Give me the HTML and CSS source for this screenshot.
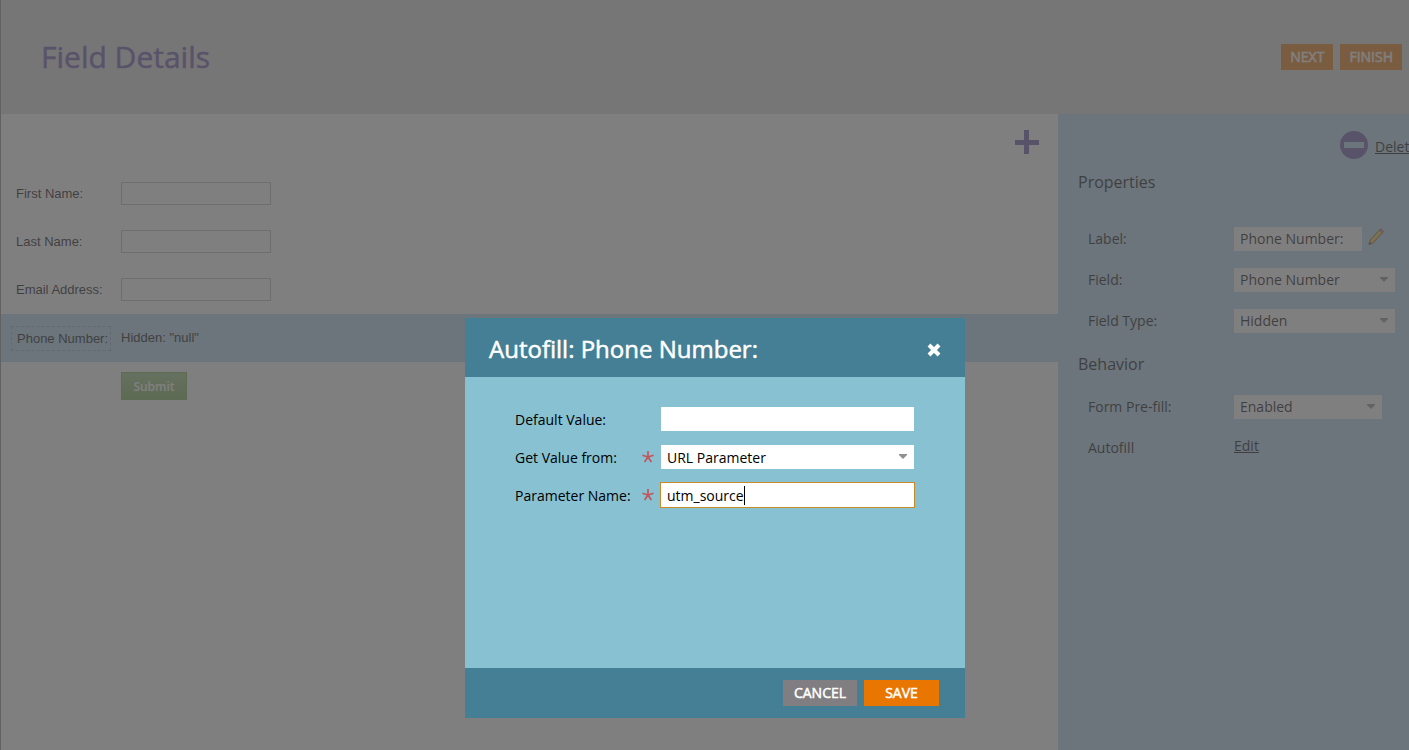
FILE: index.html
```html
<!DOCTYPE html>
<html lang="en">
<head>
    <meta charset="UTF-8">
    <meta name="viewport" content="width=device-width, initial-scale=1.0">
    <title>Field Details</title>
    <link rel="stylesheet" href="styles.css">
</head>
<body>

<div class="app">
    <header class="header">
        <h1>Field Details</h1>
        <div class="header-buttons">
            <button class="btn" type="button">NEXT</button>
            <button class="btn" type="button">FINISH</button>
        </div>
    </header>

    <div class="content">
        <main class="canvas">
            <div class="toolbar">
                <button class="icon-btn" type="button" aria-label="Add field">
                    <svg width="24" height="24" viewBox="0 0 24 24"><path d="M9 0h5v10h10v5H14v9H9v-9H0v-5h9z" fill="#6651a5"/></svg>
                </button>
            </div>
            <form>
                <div class="form-row">
                    <label for="firstName">First Name:</label>
                    <input type="text" id="firstName">
                </div>
                <div class="form-row">
                    <label for="lastName">Last Name:</label>
                    <input type="text" id="lastName">
                </div>
                <div class="form-row">
                    <label for="email">Email Address:</label>
                    <input type="text" id="email">
                </div>
                <div class="form-row selected">
                    <span class="selected-label">Phone Number:</span>
                    <span>Hidden: "null"</span>
                </div>
                <div class="form-row">
                    <button class="submit" type="button">Submit</button>
                </div>
            </form>
        </main>

        <aside class="sidebar">
            <div class="delete">
                <svg width="28" height="28" viewBox="0 0 28 28"><circle cx="14" cy="14" r="14" fill="#6651a5"/><path d="M4 11h20v6H4z" fill="#b4d6ee"/></svg>
                <a href="#">Delete</a>
            </div>
            <h2>Properties</h2>
            <div class="props">
                <div class="prop">
                    <label for="propLabel">Label:</label>
                    <input class="field short" type="text" id="propLabel" value="Phone Number:">
                    <button class="icon-btn" type="button" aria-label="Edit label">
                        <svg width="16" height="18" viewBox="0 0 16 18">
                            <path d="M1 16.500l1.300-4.500L11.500 2l3 2.700L5.300 14.800z" fill="#e8b83a" stroke="#8a6412"/>
                            <path d="M3.500 13L12.500 3.300" stroke="#ffe99a"/>
                            <path d="M11.500 2l1.300-1.200 3 2.600-1.300 1.300z" fill="#d87878" stroke="#a34848" stroke-width=".6"/>
                            <path d="M1 16.500l.7-2.300 1.600 1.500z" fill="#333"/>
                        </svg>
                    </button>
                </div>
                <div class="prop">
                    <label for="propField">Field:</label>
                    <select class="field wide" id="propField"><option>Phone Number</option></select>
                </div>
                <div class="prop">
                    <label for="propType">Field Type:</label>
                    <select class="field wide" id="propType"><option>Hidden</option></select>
                </div>
            </div>
            <h2>Behavior</h2>
            <div class="prop">
                <label for="propPrefill">Form Pre-fill:</label>
                <select class="field" id="propPrefill"><option>Enabled</option></select>
            </div>
            <div class="prop">
                <span class="prop-name">Autofill</span>
                <a class="edit" href="#">Edit</a>
            </div>
        </aside>
    </div>

    <div class="overlay">
        <div class="dialog" role="dialog" aria-labelledby="dialogTitle">
            <div class="dialog-header">
                <h2 id="dialogTitle">Autofill: Phone Number:</h2>
                <button class="icon-btn" type="button" aria-label="Close">
                    <svg width="14" height="14" viewBox="0 0 14 14"><path d="M2 2l10 10M12 2L2 12" stroke="#fff" stroke-width="4"/></svg>
                </button>
            </div>
            <div class="dialog-body">
                <div class="dialog-row">
                    <label for="defaultValue">Default Value:</label>
                    <input class="field" type="text" id="defaultValue">
                </div>
                <div class="dialog-row">
                    <label for="valueFrom">Get Value from:</label>
                    <svg width="12" height="12" viewBox="0 0 12 12"><path d="M6 6V0M6 6L.5 4.200M6 6l5.500-1.800M6 6l-3.400 5M6 6l3.400 5" stroke="#c4545a" stroke-width="1.700"/></svg>
                    <select class="field" id="valueFrom"><option>URL Parameter</option></select>
                </div>
                <div class="dialog-row">
                    <label for="paramName">Parameter Name:</label>
                    <svg width="12" height="12" viewBox="0 0 12 12"><path d="M6 6V0M6 6L.5 4.200M6 6l5.500-1.800M6 6l-3.400 5M6 6l3.400 5" stroke="#c4545a" stroke-width="1.700"/></svg>
                    <div class="active-field">
                        <input class="field" type="text" id="paramName" value="utm_source">
                        <span class="caret"></span>
                    </div>
                </div>
            </div>
            <div class="dialog-footer">
                <button class="btn cancel" type="button">CANCEL</button>
                <button class="btn save" type="button">SAVE</button>
            </div>
        </div>
    </div>
</div>

</body>
</html>
```
FILE: styles.css
```css
* {
    box-sizing: border-box;
}
body {
    margin: 0;
    overflow: hidden;
    font-family: 'Open Sans', sans-serif;
    font-size: 14px;
    color: #000;
}
h1, h2 {
    margin: 0;
    font-weight: 400;
}
a {
    color: inherit;
}
button, input, select {
    font: inherit;
    color: inherit;
}
/* the app is a little wider than the window, the overflow is cut off */
.app {
    position: relative;
    display: flex;
    flex-direction: column;
    width: calc(100% + 21px);
    min-height: 100vh;
    border-left: 1px solid #888;
}
.header {
    display: flex;
    align-items: center;
    justify-content: space-between;
    height: 114px;
    padding: 0 28px 0 40px;
    background: #d9d9db;
}
.header h1 {
    padding-bottom: 2px;
    font-size: 30px;
    color: #6651a5;
    -webkit-text-stroke: 0.5px #6651a5;
}
.header-buttons {
    display: flex;
    gap: 7px;
}
.btn {
    height: 26px;
    padding: 0 9px;
    border: none;
    background: #e87600;
    color: #fff;
    line-height: 26px;
    -webkit-text-stroke: 0.5px #fff;
    cursor: pointer;
}
.icon-btn {
    display: flex;
    padding: 0;
    border: none;
    background: none;
    cursor: pointer;
}
.content {
    display: flex;
    flex: 1;
}
.canvas {
    flex: 1;
    background: #fff;
    font-family: 'Liberation Sans', Arial, sans-serif;
    font-size: 13px;
}
.toolbar {
    display: flex;
    align-items: center;
    justify-content: flex-end;
    height: 56px;
    padding-right: 19px;
}
.form-row {
    display: flex;
    align-items: center;
    height: 48px;
    padding: 0 0 2px 15px;
}
.form-row label {
    width: 105px;
}
.form-row input {
    width: 150px;
    height: 23px;
    border: 1px solid #bbb;
    background: #fff;
}
.form-row.selected {
    padding-left: 10px;
    background: #abd6ea;
}
.selected-label {
    width: 100px;
    margin: 2px 10px 0 0;
    padding: 4px 0 4px 5px;
    border: 1px dashed #89a9bd;
    white-space: nowrap;
}
.submit {
    height: 28px;
    width: 66px;
    margin: 2px 0 0 105px;
    padding: 0;
    border: 1px solid #75ae4c;
    background: linear-gradient(#99c47c, #75ae4c);
    color: #fff;
    font: 600 12px 'Open Sans', sans-serif;
}
.sidebar {
    width: 372px;
    padding-left: 20px;
    background: #abd6ea;
}
.delete {
    display: flex;
    align-items: center;
    gap: 7px;
    height: 56px;
    margin: 3px 0 0 262px;
}
.delete a {
    padding-top: 2px;
}
.sidebar h2 {
    margin: -1px 0 12px;
    font-size: 16px;
    line-height: 20px;
}
.props {
    padding: 14px 0;
}
.prop {
    display: flex;
    align-items: center;
    height: 41px;
    padding-left: 10px;
}
.prop label, .prop-name {
    width: 146px;
}
.prop .icon-btn {
    margin: 0 0 4px 6px;
}
.edit {
    padding-bottom: 4px;
}
.field {
    width: 148px;
    height: 24px;
    padding: 0 6px;
    border: none;
    border-radius: 0;
    background: #fff;
    outline: none;
}
.field.short {
    width: 128px;
}
.field.wide {
    width: 161px;
}
select.field {
    appearance: none;
    background: #fff url("data:image/svg+xml,%3Csvg xmlns='http://www.w3.org/2000/svg' width='8' height='5'%3E%3Cpath d='M0 0h8v1L4 5 0 1z' fill='%23909090'/%3E%3C/svg%3E") no-repeat right 7px top 9px;
}
.overlay {
    position: absolute;
    inset: 0 0 0 -1px;
    background: rgba(85, 84, 86, 0.75);
}
.dialog {
    width: 500px;
    margin: 318px auto 0;
    background: #88c1d2;
}
.dialog-header {
    display: flex;
    align-items: center;
    justify-content: space-between;
    height: 59px;
    padding: 4px 24px 0;
    background: #447f95;
    color: #fff;
}
.dialog-header h2 {
    padding-bottom: 3px;
    font-size: 24px;
    -webkit-text-stroke: 0.5px #fff;
}
.dialog-body {
    height: 291px;
    padding: 23px 51px 23px 50px;
}
.dialog-row {
    display: flex;
    align-items: center;
    height: 38px;
}
.dialog-row label {
    width: 127px;
}
.dialog-row .field {
    width: 253px;
    margin-left: auto;
}
.active-field {
    position: relative;
    margin: 0 -1px 0 auto;
    border: 1px solid #c98a2b;
}
.active-field .field {
    display: block;
}
.caret {
    position: absolute;
    top: 3px;
    left: 83px;
    width: 1px;
    height: 19px;
    background: #000;
}
.dialog-footer {
    display: flex;
    align-items: center;
    justify-content: flex-end;
    gap: 7px;
    height: 50px;
    padding-right: 26px;
    background: #447f95;
}
.dialog-footer .btn {
    width: 75px;
}
.dialog-footer .cancel {
    width: 74px;
    background: #807e80;
}
```
